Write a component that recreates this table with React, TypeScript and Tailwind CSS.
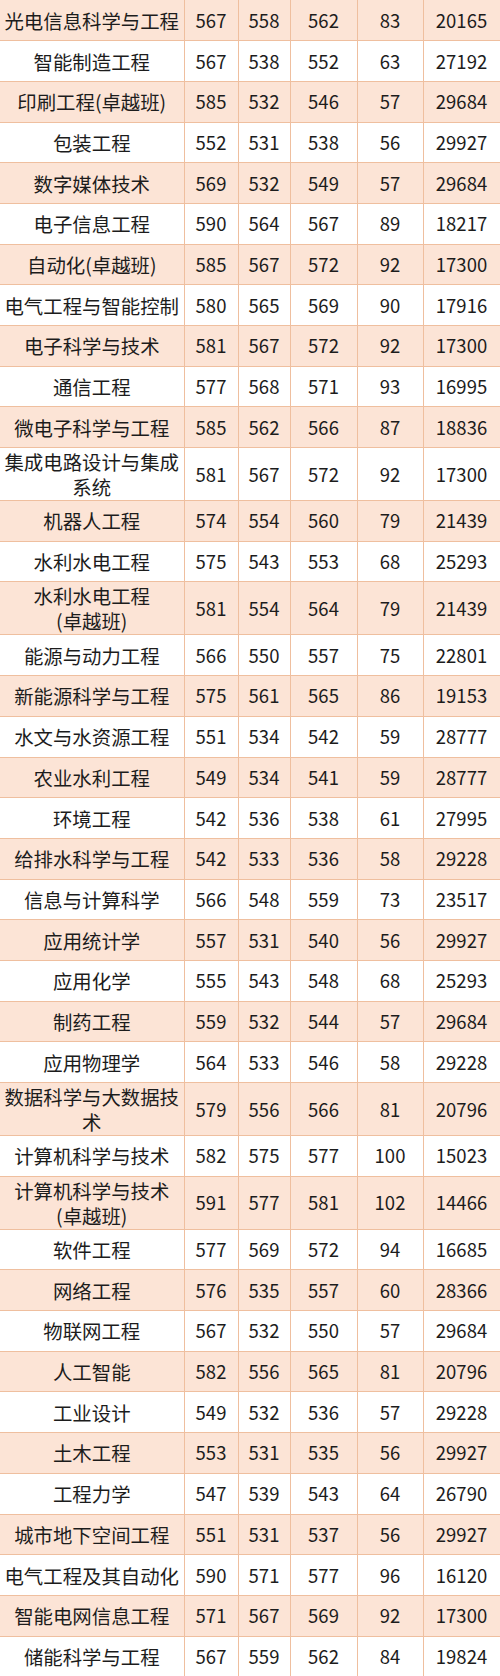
const rows: [string, string, string, string, string, string][] = [
  ["光电信息科学与工程", "567", "558", "562", "83", "20165"],
  ["智能制造工程", "567", "538", "552", "63", "27192"],
  ["印刷工程(卓越班)", "585", "532", "546", "57", "29684"],
  ["包装工程", "552", "531", "538", "56", "29927"],
  ["数字媒体技术", "569", "532", "549", "57", "29684"],
  ["电子信息工程", "590", "564", "567", "89", "18217"],
  ["自动化(卓越班)", "585", "567", "572", "92", "17300"],
  ["电气工程与智能控制", "580", "565", "569", "90", "17916"],
  ["电子科学与技术", "581", "567", "572", "92", "17300"],
  ["通信工程", "577", "568", "571", "93", "16995"],
  ["微电子科学与工程", "585", "562", "566", "87", "18836"],
  ["集成电路设计与集成|系统", "581", "567", "572", "92", "17300"],
  ["机器人工程", "574", "554", "560", "79", "21439"],
  ["水利水电工程", "575", "543", "553", "68", "25293"],
  ["水利水电工程|(卓越班)", "581", "554", "564", "79", "21439"],
  ["能源与动力工程", "566", "550", "557", "75", "22801"],
  ["新能源科学与工程", "575", "561", "565", "86", "19153"],
  ["水文与水资源工程", "551", "534", "542", "59", "28777"],
  ["农业水利工程", "549", "534", "541", "59", "28777"],
  ["环境工程", "542", "536", "538", "61", "27995"],
  ["给排水科学与工程", "542", "533", "536", "58", "29228"],
  ["信息与计算科学", "566", "548", "559", "73", "23517"],
  ["应用统计学", "557", "531", "540", "56", "29927"],
  ["应用化学", "555", "543", "548", "68", "25293"],
  ["制药工程", "559", "532", "544", "57", "29684"],
  ["应用物理学", "564", "533", "546", "58", "29228"],
  ["数据科学与大数据技|术", "579", "556", "566", "81", "20796"],
  ["计算机科学与技术", "582", "575", "577", "100", "15023"],
  ["计算机科学与技术|(卓越班)", "591", "577", "581", "102", "14466"],
  ["软件工程", "577", "569", "572", "94", "16685"],
  ["网络工程", "576", "535", "557", "60", "28366"],
  ["物联网工程", "567", "532", "550", "57", "29684"],
  ["人工智能", "582", "556", "565", "81", "20796"],
  ["工业设计", "549", "532", "536", "57", "29228"],
  ["土木工程", "553", "531", "535", "56", "29927"],
  ["工程力学", "547", "539", "543", "64", "26790"],
  ["城市地下空间工程", "551", "531", "537", "56", "29927"],
  ["电气工程及其自动化", "590", "571", "577", "96", "16120"],
  ["智能电网信息工程", "571", "567", "569", "92", "17300"],
  ["储能科学与工程", "567", "559", "562", "84", "19824"],
];

const App = () => {
  return (
    <div className="w-[500px] bg-white text-[#1c1c1c] font-['Noto_Sans_CJK_SC','Noto_Sans',sans-serif]">
      <table className="w-[500px] table-fixed border-collapse">
        <colgroup>
          <col className="w-[184px]" />
          <col className="w-[54px]" />
          <col className="w-[52px]" />
          <col className="w-[67px]" />
          <col className="w-[66px]" />
          <col className="w-[77px]" />
        </colgroup>
        <tbody>
          {rows.map((r, i) => {
            const lines = r[0].split("|");
            const tall = lines.length > 1;
            const bg = i % 2 === 0 ? "bg-[#fce4d6]" : "bg-white";
            return (
              <tr key={i} className={`${bg} ${tall ? "h-[53px]" : "h-[40.7px]"}`}>
                <td className="border-r border-b border-[#efbf9f] p-0 text-center text-[19.4px] leading-[25px] whitespace-nowrap">
                  {lines.map((l, j) => (
                    <div key={j}>{l}</div>
                  ))}
                </td>
                {r.slice(1).map((v, j) => (
                  <td
                    key={j}
                    className="border-r border-b border-[#efbf9f] p-0 text-center text-[18.5px] leading-[25px]"
                  >
                    {v}
                  </td>
                ))}
              </tr>
            );
          })}
        </tbody>
      </table>
    </div>
  );
};

export default App;
